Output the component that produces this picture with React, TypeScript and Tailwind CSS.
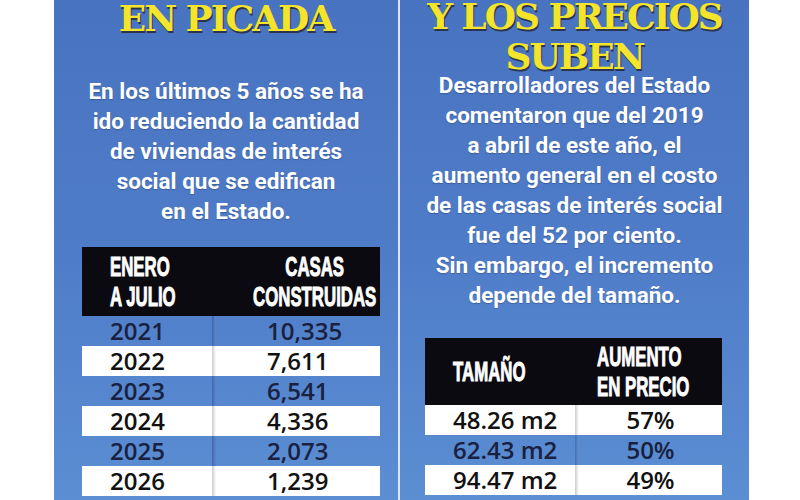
import type { ReactNode } from 'react'

const leftLines = [
  'En los últimos 5 años se ha',
  'ido reduciendo la cantidad',
  'de viviendas de interés',
  'social que se edifican',
  'en el Estado.',
]

const rightLines = [
  'Desarrolladores del Estado',
  'comentaron que del 2019',
  'a abril de este año, el',
  'aumento general en el costo',
  'de las casas de interés social',
  'fue del 52 por ciento.',
  'Sin embargo, el incremento',
  'depende del tamaño.',
]

const built = [
  ['2021', '10,335'],
  ['2022', '7,611'],
  ['2023', '6,541'],
  ['2024', '4,336'],
  ['2025', '2,073'],
  ['2026', '1,239'],
]

const sizes = [
  ['48.26 m2', '57%'],
  ['62.43 m2', '50%'],
  ['94.47 m2', '49%'],
]

function Title({ children }: { children: ReactNode }) {
  return (
    <div className="whitespace-nowrap text-center font-['DejaVu_Serif',serif] text-[36px] font-black leading-[40px] tracking-[-2px] text-[#f4e42a] [text-shadow:1px_2px_0_#2b3350]">
      {children}
    </div>
  )
}

function Body({ lines }: { lines: string[] }) {
  return (
    <div className="whitespace-nowrap text-center font-['Roboto',sans-serif] text-[22.5px] font-bold leading-[30px] text-white [text-shadow:0_1px_1px_rgba(20,30,60,0.3)]">
      {lines.map((l) => (
        <div key={l}>{l}</div>
      ))}
    </div>
  )
}

function Head({ children, className = '' }: { children: ReactNode; className?: string }) {
  return (
    <div
      className={`whitespace-nowrap font-['Liberation_Sans',sans-serif] text-[28px] font-bold leading-[30px] text-white scale-x-[0.6] [-webkit-text-stroke:1px_white] ${className}`}
    >
      {children}
    </div>
  )
}

export default function App() {
  return (
    <div className="flex h-[500px] w-[800px] overflow-hidden bg-white">
      <div className="ml-[54px] flex h-full w-[695px] bg-gradient-to-b from-[#4873c0] via-[#4f7cc8] to-[#5b8ed3]">
        {/* left panel */}
        <section className="flex w-[344px] flex-col">
          <div className="-mt-[2px]">
            <Title>EN PICADA</Title>
          </div>
          <div className="mt-[38px]">
            <Body lines={leftLines} />
          </div>
          <div className="ml-[28px] mt-[21px] w-[298px]">
            <div className="flex h-[69px] items-center bg-[#0b0a10]">
              <div className="w-[130px] pl-[28px]">
                <Head className="origin-left">
                  ENERO
                  <br />A JULIO
                </Head>
              </div>
              <div className="flex-1 text-center">
                <Head className="origin-center">
                  CASAS
                  <br />
                  CONSTRUIDAS
                </Head>
              </div>
            </div>
            {built.map(([year, count], i) => (
              <div
                key={year}
                className={`flex h-[30px] items-center font-['Open_Sans',sans-serif] text-[24px] font-semibold ${
                  i % 2 === 1 ? 'bg-white text-[#111111]' : 'text-[#1a2140]'
                }`}
              >
                <div className="w-[130px] pl-[28px]">{year}</div>
                <div
                  className={`h-full w-[4px] ${
                    i % 2 === 1
                      ? 'bg-gradient-to-r from-[#c9ccd3] to-white'
                      : 'bg-gradient-to-r from-[#3f66ad] to-[#5d88cc]'
                  }`}
                />
                <div className="flex-1 pl-[51px]">{count}</div>
              </div>
            ))}
          </div>
        </section>

        <div className="h-full w-[2px] bg-[#dbe7f6]" />

        {/* right panel */}
        <section className="flex flex-1 flex-col">
          <div className="-mt-[4px]">
            <Title>
              Y LOS PRECIOS
              <br />
              SUBEN
            </Title>
          </div>
          <div className="-mt-[6px]">
            <Body lines={rightLines} />
          </div>
          <div className="ml-[25px] mt-[28px] w-[297px]">
            <div className="flex h-[67px] items-center bg-[#0b0a10]">
              <div className="w-[152px] pl-[28px]">
                <Head className="origin-left">TAMAÑO</Head>
              </div>
              <div className="flex-1 pl-[23px]">
                <Head className="origin-left">
                  AUMENTO
                  <br />
                  EN PRECIO
                </Head>
              </div>
            </div>
            {sizes.map(([size, pct], i) => (
              <div
                key={size}
                className={`flex h-[30px] items-center font-['Open_Sans',sans-serif] text-[24px] font-semibold ${
                  i % 2 === 0 ? 'bg-white text-[#111111]' : 'text-[#1a2140]'
                }`}
              >
                <div className="w-[150px] pl-[28px]">{size}</div>
                <div
                  className={`h-full w-[4px] ${
                    i % 2 === 0
                      ? 'bg-gradient-to-r from-[#c9ccd3] to-white'
                      : 'bg-gradient-to-r from-[#4570b5] to-[#6290d2]'
                  }`}
                />
                <div className="flex-1 text-center">{pct}</div>
              </div>
            ))}
          </div>
        </section>
      </div>
    </div>
  )
}
